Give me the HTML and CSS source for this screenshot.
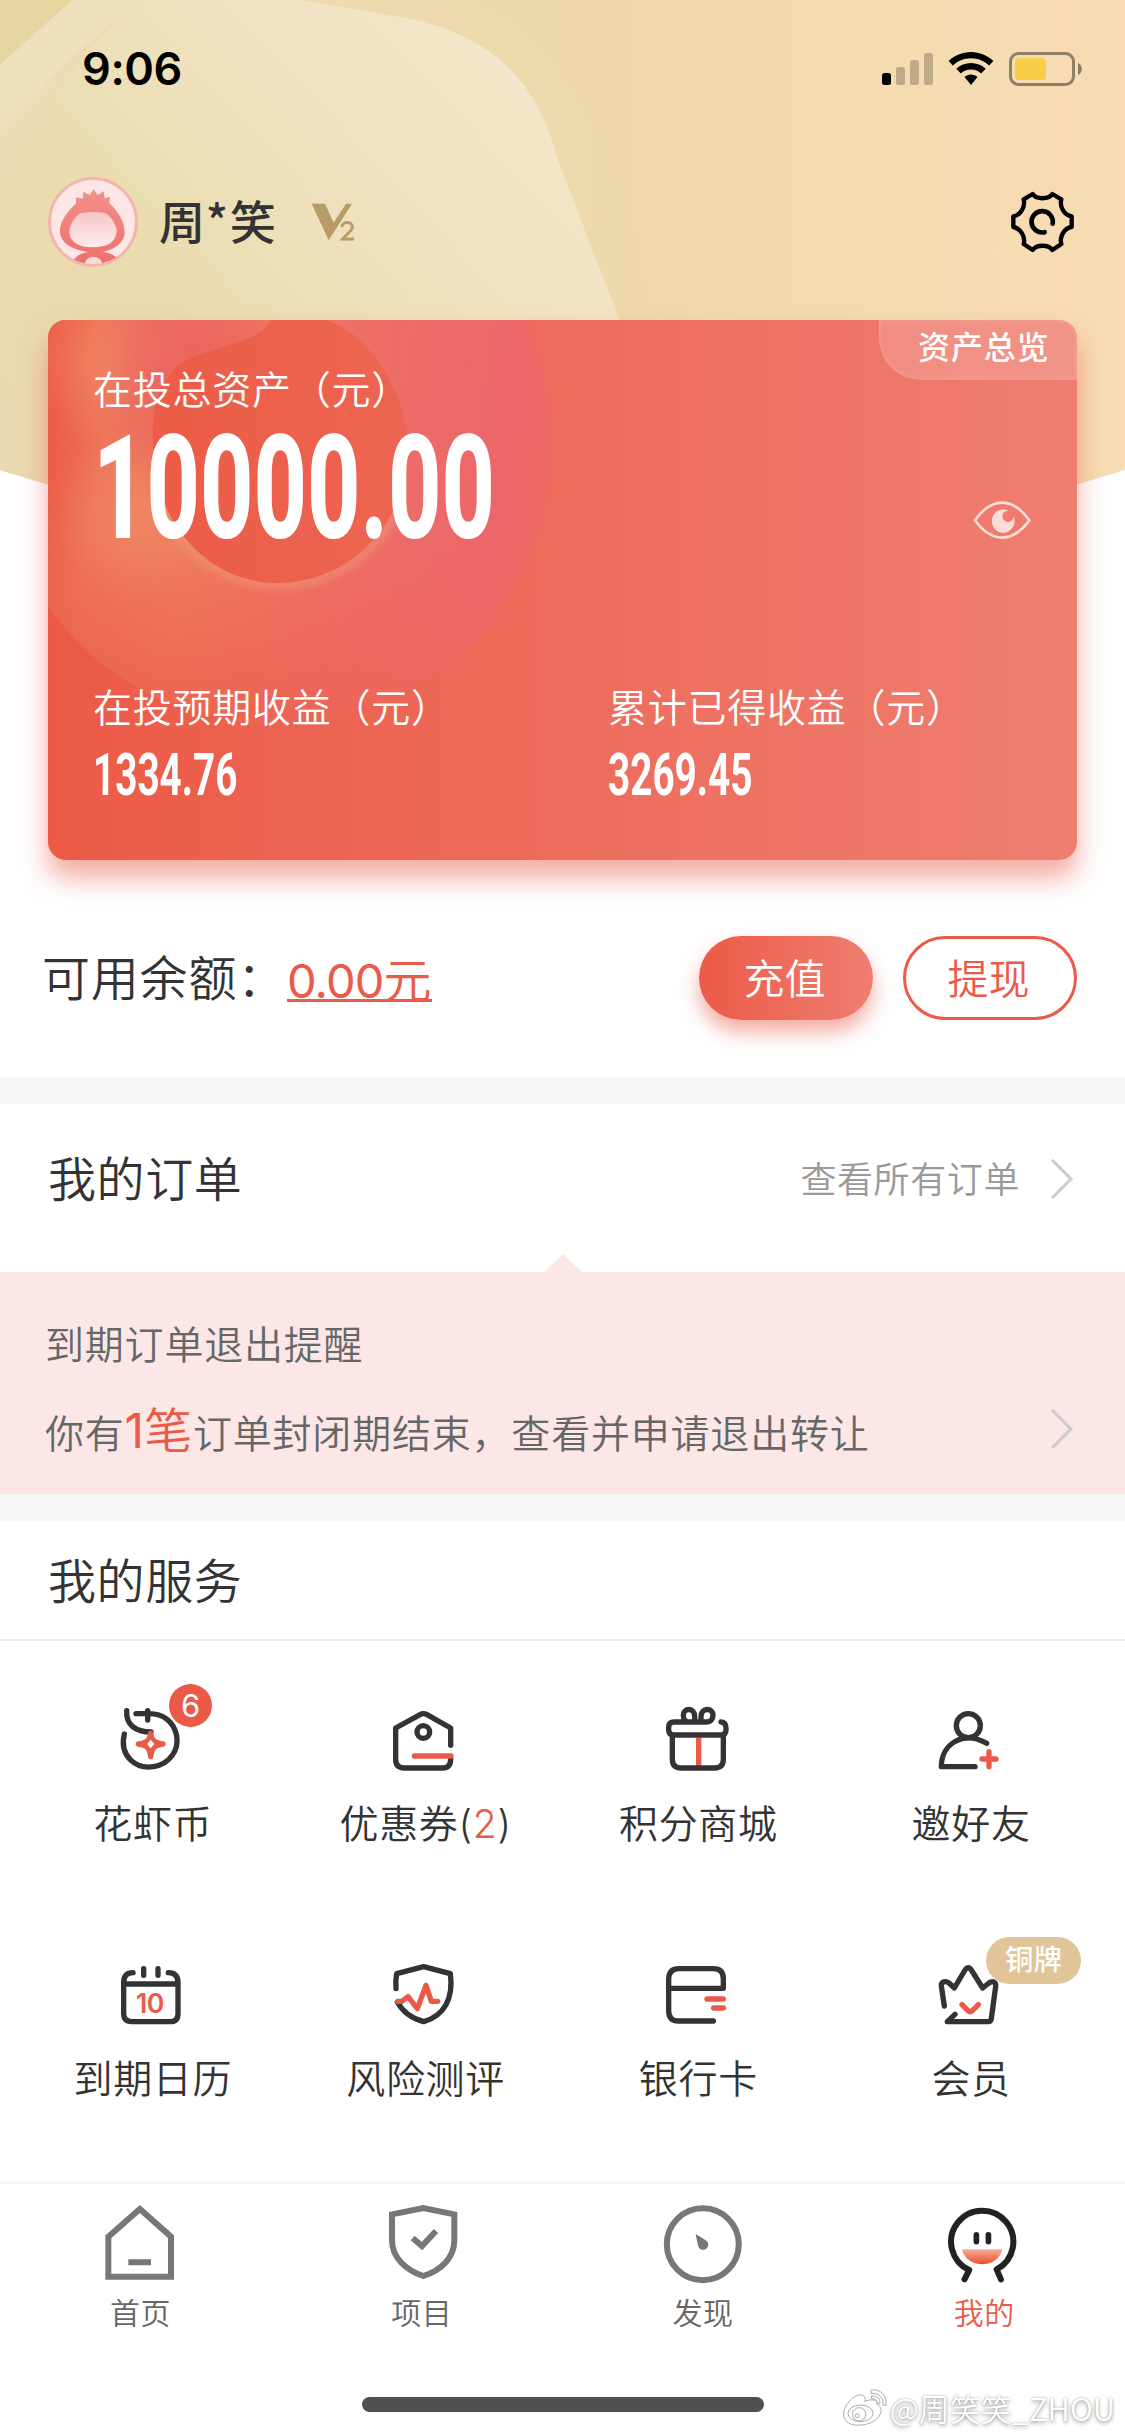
FILE: index.html
```html
<!DOCTYPE html>
<html lang="zh-CN">
<head>
<meta charset="utf-8">
<title>我的</title>
<link rel="stylesheet" href="styles.css">
</head>
<body>
<div class="screen">
  <section class="hero">
    <svg class="hero-bg" viewBox="0 0 1125 820" width="1125" height="820" aria-hidden="true">
      <defs>
        <linearGradient id="sand" x1="0" x2="1" y1="0" y2="0"><stop offset="0" stop-color="#e9dab1"/><stop offset=".5" stop-color="#eed8a9"/><stop offset=".75" stop-color="#f3dbaf"/><stop offset="1" stop-color="#f7dcb4"/></linearGradient>
        <linearGradient id="veil" x1=".9" x2=".15" y1=".1" y2=".8"><stop offset="0" stop-color="#f4e7cc"/><stop offset=".35" stop-color="#f0e2c1"/><stop offset=".7" stop-color="#eadcae"/><stop offset="1" stop-color="#ebdab1"/></linearGradient>
        <linearGradient id="edge" x1="0" x2="1" y1="0" y2="0"><stop offset="0" stop-color="#ecdcb4"/><stop offset="1" stop-color="#efd9ab"/></linearGradient>
        <clipPath id="fold"><path d="M0 0H1125V470L562 640L0 470Z"/></clipPath>
      </defs>
      <g clip-path="url(#fold)">
        <path fill="url(#sand)" d="M0 0H1125V640H0Z"/>
        <path fill="#e7d59f" d="M0 0H72L0 65Z"/>
        <path fill="url(#edge)" d="M72 0H478C540 30 566 70 590 110C620 165 638 250 652 330L640 640H0V65Z"/>
        <path fill="url(#veil)" d="M148 0H300L405 18C500 36 540 90 558 160L620 322L640 640H0V186C40 125 76 42 148 0Z"/>
        <path fill="#f3ead0" opacity=".3" d="M72 0H148C76 42 50 85 0 132V65Z"/>
      </g>
    </svg>

    <header class="status">
      <span class="time">9:06</span>
      <svg class="status-icons" viewBox="880 48 204 42" width="204" height="42">
        <rect x="882" y="73" width="9" height="12" rx="2.5"/>
        <g opacity=".22"><rect x="896" y="67" width="9" height="18" rx="2.5"/><rect x="910" y="60" width="9" height="25" rx="2.5"/><rect x="924" y="53" width="9" height="32" rx="2.5"/></g>
        <path d="M971 52c8.700 0 16.500 3.500 22.400 9l-4.200 4.600c-4.800-4.600-11.200-7.300-18.200-7.300s-13.400 2.700-18.200 7.300l-4.200-4.600c5.900-5.500 13.700-9 22.400-9zM971 63c5.700 0 10.800 2.200 14.700 5.800l-4.500 4.700c-2.700-2.500-6.200-4-10.200-4s-7.500 1.500-10.200 4l-4.500-4.700c3.900-3.600 9-5.800 14.700-5.800zM971 74.500c2.500 0 4.800.9 6.500 2.500l-6.500 8-6.500-8c1.700-1.600 4-2.500 6.500-2.500z"/>
        <rect x="1010.500" y="53.500" width="63" height="31" rx="8" fill="none" stroke="#000" stroke-opacity=".42" stroke-width="3"/>
        <rect x="1015" y="58" width="31" height="22" rx="4" fill="#f7ce46"/>
        <path d="M1078 63c5 2 5 10 0 12z" opacity=".45"/>
      </svg>
    </header>

    <div class="profile">
      <svg class="avatar" viewBox="54 51 270 270" width="90" height="90">
        <defs>
          <linearGradient id="hood" x1="0" x2="0" y1="0" y2="1"><stop offset="0" stop-color="#f3908c"/><stop offset="1" stop-color="#ee6f6b"/></linearGradient>
          <linearGradient id="face" x1="0" x2="0" y1="0" y2="1"><stop offset="0" stop-color="#f5c5c5"/><stop offset="1" stop-color="#fdecec"/></linearGradient>
          <clipPath id="disc"><circle cx="189" cy="186" r="127"/></clipPath>
        </defs>
        <circle cx="189" cy="186" r="130.500" fill="#fce7e6" stroke="#f4b5ac" stroke-width="9"/>
        <g clip-path="url(#disc)">
          <path fill="url(#hood)" d="M138 112l21 4 1-21 19 10 12-17 12 17 18-11 3 21 16-5-2 20c28 26 46 56 46 86 0 36-38 54-66 60 26 2 46 14 56 36H124c8-20 26-34 54-36-50-6-88-26-88-64 0-28 22-56 48-82z"/>
          <path fill="url(#face)" d="M150 160q38-8 78 0c14 10 32 34 32 54-2 34-30 48-71 48s-69-14-71-46c0-22 18-46 32-56z"/>
          <path fill="#fbdcdb" d="M164 316c0-34 53-34 53 0z"/>
        </g>
      </svg>
      <span class="name">周<i>*</i>笑</span>
      <svg class="level" viewBox="840 130 132 114" width="44" height="38"><path fill="#b89b66" d="M842 132h40l26 57 37-57h18l-70 110z"/><path fill="none" stroke="#b89b66" stroke-width="9" d="M933 202c0-18 31-18 31 0 0 12-20 24-29 36h34"/></svg>
      <svg class="gear" viewBox="510 93 195 186" width="65" height="62" fill="none" stroke="#000" stroke-linejoin="round" stroke-linecap="round">
        <path stroke-width="13" d="M578 102C590 119 625 119 637 102L664 118C658 140 672 165 695 169V201C674 203 657 230 664 252L637 270C625 253 590 253 578 270L551 252C557 230 542 205 520 201V169C542 165 557 140 551 118Z"/>
        <path stroke-width="14" d="M638 191A32 32 0 1 0 614 216.500"/>
      </svg>
    </div>

    <article class="asset-card">
      <svg class="card-art" viewBox="48 320 1029 540" width="1029" height="540" aria-hidden="true">
        <defs>
          <linearGradient id="ring" gradientUnits="userSpaceOnUse" x1="60" x2="555" y1="400" y2="480"><stop offset="0" stop-color="#ec5e4a"/><stop offset=".1" stop-color="#ed7459"/><stop offset=".3" stop-color="#ee7d60"/><stop offset=".6" stop-color="#ed6e65"/><stop offset=".9" stop-color="#ec666b"/><stop offset="1" stop-color="#ec6960"/></linearGradient>
          <linearGradient id="core" x1="0" x2="1" y1="0" y2="0"><stop offset="0" stop-color="#ec5c47"/><stop offset="1" stop-color="#ed6552"/></linearGradient>
          <radialGradient id="glow"><stop offset="0" stop-color="#f08c66"/><stop offset="1" stop-color="#f08c66" stop-opacity="0"/></radialGradient>
          <radialGradient id="rose"><stop offset="0" stop-color="#eb5c5d"/><stop offset=".5" stop-color="#eb5c5d" stop-opacity=".8"/><stop offset="1" stop-color="#eb5c5d" stop-opacity="0"/></radialGradient>
          <linearGradient id="fade" gradientUnits="userSpaceOnUse" x1="0" x2="0" y1="540" y2="728"><stop offset="0" stop-color="#fff"/><stop offset="1" stop-color="#fff" stop-opacity=".15"/></linearGradient>
          <mask id="soft" maskUnits="userSpaceOnUse" x="0" y="300" width="700" height="440"><path fill="url(#fade)" d="M0 300H700V740H0Z"/></mask>
          <filter id="blur"><feGaussianBlur stdDeviation="4"/></filter>
        </defs>
        <circle cx="275" cy="446" r="278" fill="url(#ring)" mask="url(#soft)"/>
        <ellipse cx="115" cy="360" rx="80" ry="90" fill="url(#glow)" opacity=".85"/>
        <ellipse cx="135" cy="515" rx="75" ry="90" fill="url(#glow)" opacity=".65"/>
        <ellipse cx="190" cy="370" rx="100" ry="130" fill="url(#rose)" opacity=".7"/>
        <circle cx="280" cy="457" r="128" fill="none" stroke="#f19a78" stroke-width="7" opacity=".75" filter="url(#blur)" stroke-dasharray="300 510" stroke-dashoffset="-50"/>
        <path fill="url(#core)" d="M154 455C148 400 165 368 195 356C230 344 265 338 270 320H325C365 330 408 390 408 450C408 522 350 583 277 583C210 583 157 525 154 455Z"/>
      </svg>
      <div class="overview">资产总览</div>
      <p class="card-label">在投总资产（元）</p>
      <div class="total-row">
        <strong class="total">10000.00</strong>
        <svg class="eye" viewBox="398 1020 174 120" width="58" height="40"><path fill="none" stroke="#fbdcd8" stroke-width="8" stroke-linejoin="round" d="M404 1081C454 1010 516 1010 567 1081C516 1150 454 1150 404 1081Z"/><path fill="#fbdcd8" d="M504 1052A34 35 0 1 0 520 1070A17 17 0 1 1 504 1052Z"/></svg>
      </div>
      <div class="earnings">
        <div><p class="card-label">在投预期收益（元）</p><strong class="amount">1334.76</strong></div>
        <div><p class="card-label">累计已得收益（元）</p><strong class="amount">3269.45</strong></div>
      </div>
    </article>

    <div class="balance">
      <span class="balance-label">可用余额：</span>
      <a class="balance-value"><b>0.00</b>元</a>
      <button class="btn solid">充值</button>
      <button class="btn outline">提现</button>
    </div>
  </section>

  <section class="orders">
    <h2>我的订单</h2>
    <span class="more">查看所有订单</span>
    <svg class="chev" viewBox="0 0 24 42" width="24" height="42"><path d="M2 2L21 21L2 40"/></svg>
  </section>

  <section class="notice">
    <p>到期订单退出提醒</p>
    <div class="notice-row">
      <p>你有<em><b>1</b>笔</em>订单封闭期结束，查看并申请退出转让</p>
      <svg class="chev" viewBox="0 0 24 42" width="24" height="42"><path d="M2 2L21 21L2 40"/></svg>
    </div>
  </section>

  <section class="services">
    <h2>我的服务</h2>
    <div class="grid">
      <div class="item">
        <svg class="ico" viewBox="97 90 240 240"><path d="M134 192C118 260 170 298 222 290C272 282 298 238 291 198C283 154 250 131 208 131H169M204 122V150M141 122C138 164 168 186 214 186"/><path class="r" fill="#eb5a48" d="M213 190C216 210 222 218 250 222C222 226 216 234 213 260C210 234 204 226 176 222C204 218 210 210 213 190Z"/><path class="w" d="M213 209L224 222L213 235L202 222Z"/></svg>
        <span>花虾币</span><b class="badge">6</b>
      </div>
      <div class="item">
        <svg class="ico" viewBox="915 90 240 240"><path d="M1112 226V174L1041 134Q1030 128 1020 134L947 174V268Q947 294 973 294H1088Q1112 294 1112 266"/><circle cx="1030" cy="186" r="19"/><path class="r" d="M1003 258H1113"/></svg>
        <span>优惠券<i>(<em>2</em>)</i></span>
      </div>
      <div class="item">
        <svg class="ico" viewBox="174 90 240 240"><path class="r butt" d="M296 203V288"/><path d="M363 156Q378 157 378 174V180Q378 195 363 195H221Q206 195 206 180V172Q206 156 222 156H284V140C284 112 250 112 250 136C250 148 256 156 266 156M303 156V140C303 112 339 112 339 136C339 150 331 156 320 156H266M217 198V268Q217 294 243 294H344Q370 294 370 268V198"/></svg>
        <span>积分商城</span>
      </div>
      <div class="item">
        <svg class="ico" viewBox="992 90 240 240"><ellipse cx="1104" cy="167" rx="36" ry="36"/><path d="M1159 220C1092 180 1023 220 1023 290H1124"/><path class="r" d="M1145 267H1187M1166 245V290"/></svg>
        <span>邀好友</span>
      </div>
      <div class="item">
        <svg class="ico" viewBox="157 105 240 240"><path d="M220 158Q192 158 192 188V280Q192 305 216 305H331Q355 305 355 281V188Q355 158 326 158M192 192H355M252 146V166M295 146V166"/><text x="271" y="279" text-anchor="middle">10</text></svg>
        <span>到期日历</span>
      </div>
      <div class="item">
        <svg class="ico" viewBox="975 105 240 240"><path d="M1008 206Q1006 182 1010 161L1091 140L1171 161C1181 234 1154 286 1091 305Q1036 290 1012 246"/><path class="r" d="M1013 244H1025L1044 230L1072 266L1098 196L1114 244H1133"/></svg>
        <span>风险测评</span>
      </div>
      <div class="item">
        <svg class="ico" viewBox="174 105 240 240"><path d="M340 303H236Q206 303 206 272V178Q206 146 238 146H340Q370 146 370 176V205H207"/><path class="r" d="M321 237H370M341 264H370"/></svg>
        <span>银行卡</span>
      </div>
      <div class="item">
        <svg class="ico" viewBox="992 105 240 240"><path d="M1032 258L1023 198C1022 184 1036 182 1046 189L1062 204L1094 150Q1104 136 1113 150L1147 204L1166 189C1177 181 1188 187 1186 199L1173 296Q1172 305 1163 305H1041L1064 283"/><path class="r" d="M1085 254L1103 272Q1109 278 1116 272L1134 254"/></svg>
        <span>会员</span><b class="medal">铜牌</b>
      </div>
    </div>
  </section>

  <nav class="tabs">
    <a><svg viewBox="107 90 270 270" fill="none" stroke="#777" stroke-width="18"><path d="M144 200L238.500 117L332 200V320H144ZM204 277H272"/></svg>首页</a>
    <a><svg viewBox="951 90 270 270" fill="none" stroke="#777" stroke-width="18"><path d="M996 133L1090 114L1183 133V210C1183 262 1146 300 1090 318C1036 300 996 262 996 210ZM1058 204L1086 228L1128 183"/></svg>项目</a>
    <a><svg viewBox="173.600 89.600 269 269"><circle cx="307.500" cy="222" r="107.500" fill="none" stroke="#777" stroke-width="18"/><path fill="#777" d="M286 191L315 209A15.500 15.500 0 1 1 293 225Z"/></svg>发现</a>
    <a class="on"><svg viewBox="1013.800 89.600 269 269"><defs><linearGradient id="grin" x1="0" x2="0" y1="0" y2="1"><stop offset="0" stop-color="#f4ad9b"/><stop offset="1" stop-color="#ec4c26"/></linearGradient></defs><path fill="none" stroke="#222" stroke-width="18" stroke-linecap="round" stroke-linejoin="round" d="M1090 327L1104 299A93 93 0 1 1 1186 297L1199 327"/><path stroke="#222" stroke-width="17" stroke-linecap="round" d="M1125.500 194V214M1161.500 194V214"/><path fill="url(#grin)" d="M1082 237H1203C1190 297 1096 297 1082 237Z"/></svg>我的</a>
  </nav>

  <footer class="foot">
    <div class="home-bar"></div>
    <div class="mark">
      <svg viewBox="720 650 142 120" width="47" height="40" fill="#fff" stroke="#9a9a9a" stroke-width="2.500"><path d="M728 722C734 694 766 664 786 672C794 676 794 684 792 690C812 682 832 684 829 700C844 706 844 722 834 736C812 766 752 770 734 748Q725 738 728 722Z"/><ellipse cx="779" cy="726" rx="38" ry="25"/><circle cx="775" cy="729" r="20"/><circle cx="769" cy="733" r="6"/><path d="M811 656C840 650 860 676 856 702L847 702C850 680 836 664 811 666ZM812 674C830 672 840 684 837 697L829 696C830 686 824 682 812 682Z"/></svg>
      <span>@周笑笑_ZHOU</span>
    </div>
  </footer>
</div>
</body>
</html>
```

FILE: styles.css
```css
* { box-sizing: border-box; margin: 0; padding: 0; }
body {
  width: 1125px;
  background: #fff;
  color: #333;
  font-family: "Noto Sans CJK SC", sans-serif;
  font-weight: 350;
}
b, i, em, strong { font-weight: inherit; font-style: normal; }
svg { display: block; flex: none; }
.screen { position: relative; width: 1125px; height: 2436px; overflow: hidden; display: flex; flex-direction: column; }

.hero { position: relative; height: 1077px; flex: none; }
.hero-bg { position: absolute; left: 0; top: 0; }
.hero > :not(.hero-bg) { position: relative; }

.status { height: 132px; padding: 48px 41px 0 82px; display: flex; justify-content: space-between; align-items: flex-start; }
.time { font: 600 45px/42px Inter, sans-serif; letter-spacing: -.4px; color: #000; }

.profile { height: 188px; padding: 0 50px 8px 48px; display: flex; align-items: center; }
.name { margin-left: 21px; font-size: 46px; line-height: 60px; font-weight: 500; letter-spacing: .8px; margin-top: -6px; }
.name i { display: inline-block; width: 24px; }
.level { margin-left: 34px; }
.gear { margin-left: auto; }

.asset-card {
  width: 1029px; height: 540px; margin: 0 48px; padding: 45px 46px 0 45px;
  border-radius: 18px; color: #fff;
  background: linear-gradient(90deg, #ec5a47, #ef7e70);
  box-shadow: 0 18px 27px rgba(235, 90, 72, .5);
}
.card-art { position: absolute; left: 0; top: 0; border-radius: 18px; }
.asset-card > :not(.card-art):not(.overview) { position: relative; }
.overview {
  position: absolute; right: 0; top: 0; width: 198px; height: 60px; padding-left: 36px;
  border: 3px solid rgba(255, 255, 255, .22); border-radius: 0 18px 0 42px;
  background: rgba(255, 255, 255, .17); background-clip: padding-box;
  font-size: 32px; line-height: 45px; font-weight: 500; letter-spacing: .9px; white-space: nowrap;
}
.card-label { font-size: 39px; line-height: 44px; letter-spacing: .75px; white-space: nowrap; }
.total-row { height: 150px; padding-top: 15px; display: flex; justify-content: space-between; }
.total { width: 400px; font: 800 145px/122px Roboto, sans-serif; transform: scaleX(.64); transform-origin: 0 0; margin-top: 3px; height: 122px; white-space: nowrap; }
.eye { margin-top: 76px; }
.earnings { display: grid; grid-template-columns: 515px 1fr; margin-top: 124px; }
.amount { display: block; font: 700 60px/60px Roboto, sans-serif; transform: scaleX(.645); transform-origin: 0 0; margin-top: 18px; white-space: nowrap; }

.balance { display: flex; align-items: center; height: 84px; margin-top: 76px; padding: 0 48px 0 42px; font-size: 48px; line-height: 60px; }
.balance-label { letter-spacing: .8px; margin-top: -6px; }
.balance-value { margin-left: 1px; color: #eb5a48; border-bottom: 3px solid #eb5a48; line-height: 50px; height: 50px; margin-top: -3px; white-space: nowrap; }
.balance-value b { font-family: Inter, sans-serif; font-weight: 400; font-size: 47px; letter-spacing: -.9px; }
.btn { width: 174px; height: 84px; border-radius: 42px; font: inherit; font-size: 41px; line-height: 76px; letter-spacing: 0; padding: 0 3px 4px 0; }
.solid { margin-left: auto; border: 0; color: #fff; background: linear-gradient(90deg, #ec5a47, #ef7e70); box-shadow: 0 12px 20px rgba(235, 90, 72, .5); }
.outline { margin-left: 30px; border: 3px solid #eb5a48; color: #eb5a48; background: #fff; line-height: 70px; }

h2 { font-size: 48px; line-height: 60px; font-weight: 350; letter-spacing: .6px; }
.orders { height: 195px; flex: none; border-top: 27px solid #f7f7f7; padding: 0 51px 19px 48px; display: flex; align-items: center; }
.orders h2 { margin-top: -6px; }
.more { margin: -4px 0 0 auto; color: #999; font-size: 36px; line-height: 50px; letter-spacing: .6px; }
.chev { fill: none; stroke: #ccc; stroke-width: 3; }
.orders .chev { margin-left: 30px; }

.notice { position: relative; height: 222px; flex: none; background: #fbe7e6; color: #666; padding: 45px 51px 0 45px; font-size: 39px; line-height: 50px; letter-spacing: .8px; }
.notice::before { content: ""; position: absolute; left: 544px; top: -18px; border: solid transparent; border-width: 0 19px 18px; border-bottom-color: #fbe7e6; }
.notice-row { display: flex; justify-content: space-between; align-items: center; height: 60px; margin-top: 32px; white-space: nowrap; }
.notice em { color: #eb5a48; font-size: 48px; line-height: 50px; }
.notice em b { font-family: Inter, sans-serif; font-weight: 400; letter-spacing: 0; }

.services { height: 687px; flex: none; border-top: 27px solid #f7f7f7; }
.services h2 { height: 120px; padding: 27px 48px 0; border-bottom: 2px solid #ececec; }
.grid { display: grid; grid-template-columns: repeat(4, 1fr); grid-auto-rows: 255px; padding: 0 18px 0 16px; }
.item { position: relative; display: flex; flex-direction: column; align-items: center; padding-top: 59px; font-size: 39px; line-height: 50px; letter-spacing: .7px; }
.item > span { margin-top: 16px; margin-left: 1px; white-space: nowrap; }
.item i { font-family: Inter, sans-serif; }
.item em { color: #eb5a48; }
.ico { width: 80px; height: 80px; fill: none; stroke: #333; stroke-width: 16; stroke-linecap: round; stroke-linejoin: round; }
.ico .r { stroke: #eb5a48; }
.ico .butt { stroke-linecap: butt; }
.ico .w { fill: #fff; stroke: none; }
.ico text { fill: #eb5a48; stroke: none; font: 600 80px Inter, sans-serif; letter-spacing: -1px; }
.badge { position: absolute; left: 153px; top: 43px; width: 43px; height: 43px; border-radius: 50%; background: #eb5a48; color: #fff; font: 400 31px/43px Inter, sans-serif; text-align: center; letter-spacing: 0; }
.medal { position: absolute; left: 152px; top: 41px; width: 95px; height: 47px; border-radius: 24px; background: #e1c599; color: #fff; font-size: 28px; line-height: 43px; font-weight: 500; text-align: center; letter-spacing: .5px; }

.tabs { height: 165px; flex: none; border-top: 3px solid #f6f6f6; display: grid; grid-template-columns: repeat(4, 1fr); background: #fff; }
.tabs a { display: flex; flex-direction: column; align-items: center; padding-top: 16px; color: #666; font-size: 30px; line-height: 40px; letter-spacing: .7px; }
.tabs svg { width: 90px; height: 90px; margin-bottom: 1px; }
.tabs .on { color: #eb5a48; }

.foot { position: relative; flex: 1; padding-top: 51px; }
.home-bar { width: 402px; height: 15px; margin: 0 auto; border-radius: 8px; background: #505050; }
.mark { position: absolute; right: 10px; top: 39px; display: flex; align-items: center; gap: 2px; color: #fff; font-size: 31px; line-height: 46px; white-space: nowrap; text-shadow: 0 2px 4px rgba(0, 0, 0, .35), 0 0 2px rgba(0, 0, 0, .3); }
```
